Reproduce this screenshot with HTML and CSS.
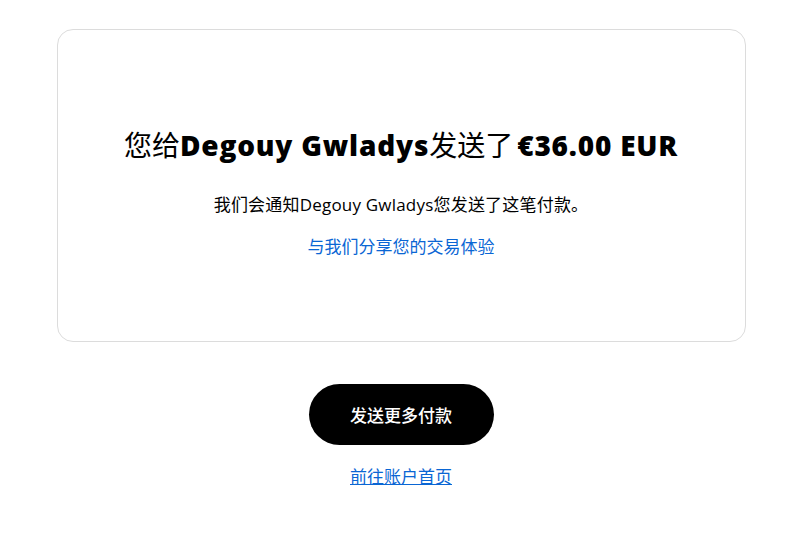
FILE: index.html
```html
<!DOCTYPE html>
<html lang="zh-CN">
<head>
  <meta charset="UTF-8" />
  <meta name="viewport" content="width=device-width, initial-scale=1.0"/>
  <title>付款已发送</title>
  <link rel="stylesheet" href="styles.css">
</head>
<body>

  <div class="container">
    <div class="card">
      <h1>您给<b>Degouy Gwladys</b>发送了<b class="amount">€36.00 EUR</b></h1>
      <p>我们会通知Degouy Gwladys您发送了这笔付款。</p>
      <a href="#" class="feedback">与我们分享您的交易体验</a>
    </div>

    <div class="actions">
      <button>发送更多付款</button>
      <a href="#" class="home">前往账户首页</a>
    </div>
  </div>

</body>
</html>
```

FILE: styles.css
```css
body {
  margin: 0;
  padding: 29px 0 0 2px;
  font-family: 'Open Sans', 'Noto Sans CJK SC', sans-serif;
  background-color: #fff;
  color: #000;
}
.container {
  max-width: 689px;
  margin: 0 auto;
  text-align: center;
}
.card {
  border: 1px solid #dcdcdc;
  border-radius: 16px;
  padding: 97px 20px 82px;
  display: flex;
  flex-direction: column;
  align-items: center;
}
h1 {
  margin: 0;
  font-size: 28px;
  line-height: 36px;
  font-weight: 400;
}
h1 b {
  font-weight: 800;
  letter-spacing: 0.8px;
}
h1 .amount { margin-left: 4px; }
p {
  margin: 30px 0 0;
  font-size: 17px;
  line-height: 24px;
  letter-spacing: 0.2px;
}
.feedback {
  margin-top: 18px;
  font-size: 17px;
  line-height: 24px;
  color: #0a66d4;
  text-decoration: none;
}
.actions {
  display: flex;
  flex-direction: column;
  align-items: center;
  margin-top: 42px;
}
button {
  width: 185px;
  height: 61px;
  background-color: #000;
  color: #fff;
  border: none;
  border-radius: 31px;
  font-family: inherit;
  font-size: 17px;
  font-weight: 500;
  cursor: pointer;
}
.home {
  margin-top: 20px;
  font-size: 17px;
  line-height: 24px;
  color: #0a66d4;
}
```
